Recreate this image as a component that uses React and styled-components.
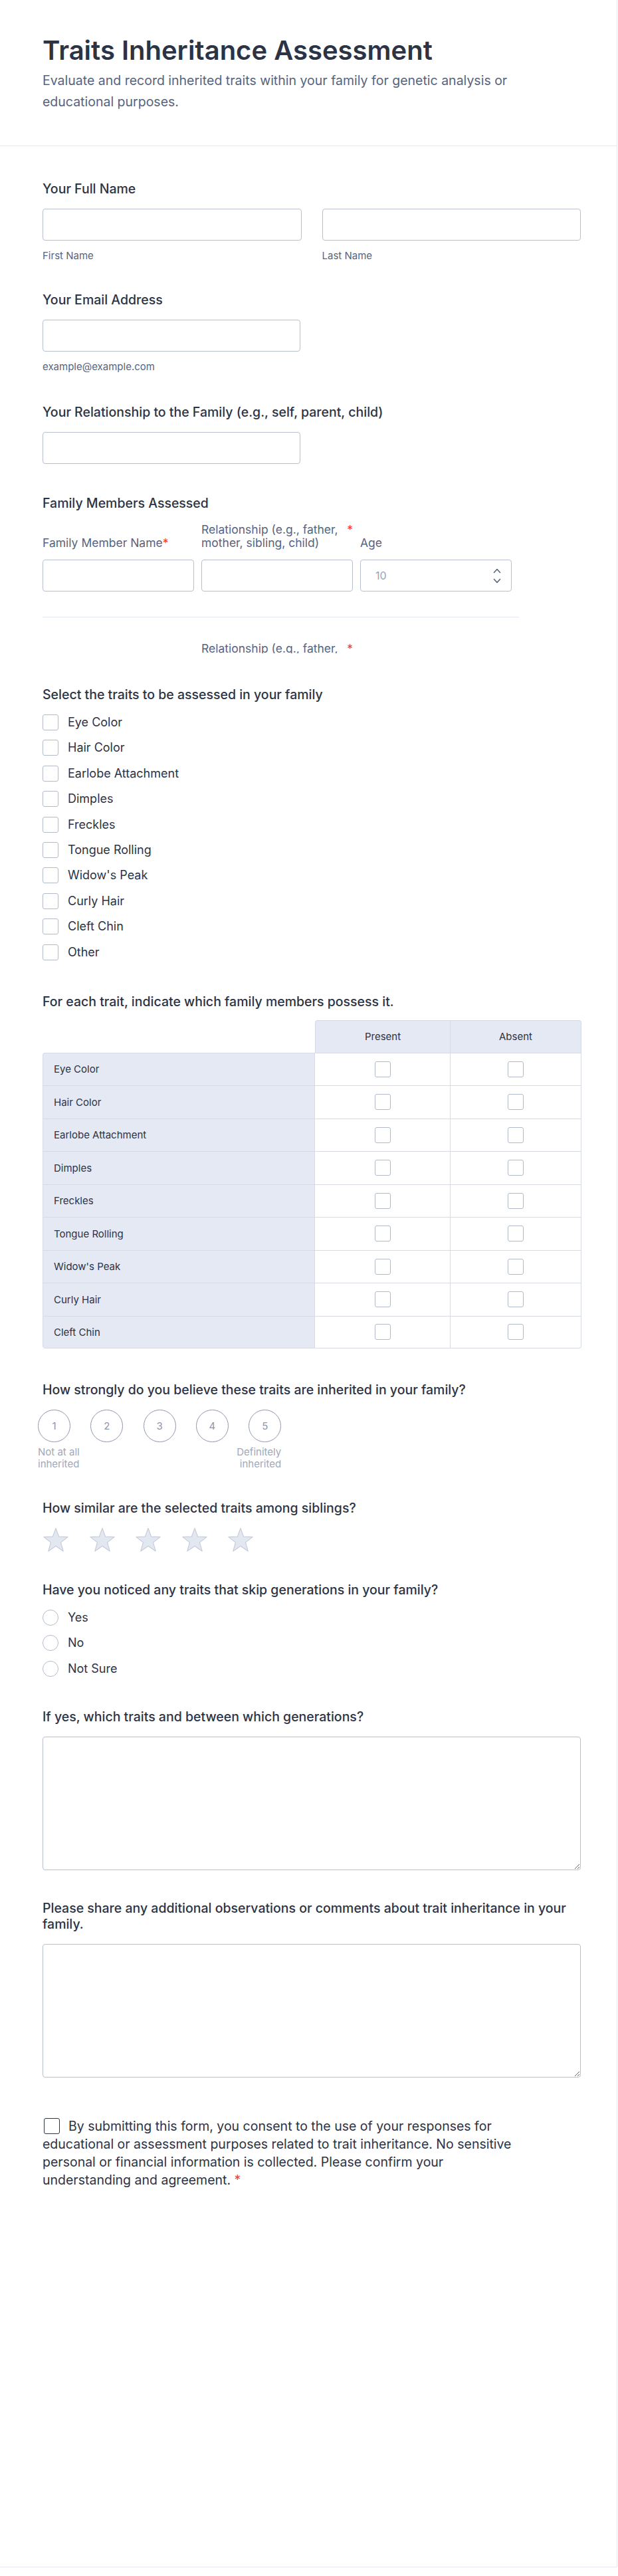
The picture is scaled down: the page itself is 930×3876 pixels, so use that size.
import React from "react";
import styled, { createGlobalStyle } from "styled-components";

const TRAITS = [
  "Eye Color",
  "Hair Color",
  "Earlobe Attachment",
  "Dimples",
  "Freckles",
  "Tongue Rolling",
  "Widow's Peak",
  "Curly Hair",
  "Cleft Chin",
];

const GlobalStyle = createGlobalStyle`
  *, *::before, *::after { box-sizing: border-box; }
  body {
    margin: 0;
    background: #ffffff;
    font-family: Inter, "Noto Sans", "Liberation Sans", sans-serif;
    color: #2c3345;
  }
  input, textarea { font-family: inherit; }
`;

const Card = styled.main`
  width: 929px;
  min-height: 3863px;
  background: #fff;
  border-right: 1px solid #e4e9f2;
  border-bottom: 1px solid #e4e9f2;
`;

const Header = styled.header`
  padding: 52px 64px 50px;
  border-bottom: 1px solid #e1e6ef;
`;

const Title = styled.h1`
  margin: 0 0 5px;
  font-size: 40px;
  line-height: 48px;
  font-weight: 600;
  color: #2c3345;
`;

const Subtitle = styled.p`
  margin: 0;
  max-width: 760px;
  font-size: 19.5px;
  line-height: 32px;
  color: #57647e;
`;

const FormBody = styled.form`
  padding: 52px 54px 80px 64px;
`;

const Question = styled.section`
  margin-top: ${(p) => (p.$mt === undefined ? 45 : p.$mt)}px;
`;

const Label = styled.div`
  margin-bottom: ${(p) => (p.$mb === undefined ? 18 : p.$mb)}px;
  font-size: 19.5px;
  line-height: 24px;
  font-weight: 500;
  color: #2c3345;
`;

const Req = styled.span`
  color: #f23a3c;
`;

const NameGrid = styled.div`
  display: grid;
  grid-template-columns: 1fr 1fr;
  column-gap: 31px;
`;

const Field = styled.div`
  display: flex;
  flex-direction: column;
`;

const TextInput = styled.input`
  width: ${(p) => p.$w || "100%"};
  height: 48px;
  padding: 0 12px;
  border: 1px solid #b8bfcd;
  border-radius: 4px;
  background: #fff;
  font-size: 16px;
  color: #2c3345;
`;

const SubLabel = styled.span`
  margin-top: 13px;
  font-size: 15px;
  line-height: 20px;
  color: #57647e;
`;

const MembersViewport = styled.div`
  width: 717px;
  height: 196px;
  margin-top: 2px;
  overflow: hidden;
`;

const MemberRow = styled.div`
  display: grid;
  grid-template-columns: repeat(3, 228px);
  column-gap: 11px;
  row-gap: 15px;
  align-items: end;
  width: 717px;
  padding-bottom: 38px;
  border-bottom: 1px solid #e3e8f0;

  & + & {
    margin-top: 37px;
  }
`;

const ColLabel = styled.div`
  display: ${(p) => (p.$split ? "flex" : "block")};
  font-size: 17.5px;
  line-height: 20px;
  color: #57647e;
`;

const AgeField = styled.div`
  display: flex;
  align-items: center;
  height: 48px;
  padding: 0 15px 0 22px;
  border: 1px solid #b8bfcd;
  border-radius: 4px;
  background: #fff;

  input {
    flex: 1;
    min-width: 0;
    border: 0;
    outline: 0;
    padding: 0;
    font-size: 16px;
    color: #2c3345;
    background: transparent;
  }
  input::placeholder {
    color: #9aa3b5;
  }
`;

const CheckList = styled.div`
  display: flex;
  flex-direction: column;
  gap: 14.4px;
`;

const OptionItem = styled.label`
  display: flex;
  align-items: center;
  gap: 14px;
  font-size: 18px;
  line-height: 24px;
  color: #2c3345;
`;

const Box = styled.span`
  display: block;
  flex: none;
  width: 24px;
  height: 24px;
  border: 1px solid #b3bbca;
  border-radius: ${(p) => (p.$round ? "50%" : "3px")};
  background: #fff;
  margin: ${(p) => (p.$center ? "0 auto" : "0")};
`;

const Matrix = styled.table`
  width: 811px;
  border-collapse: separate;
  border-spacing: 0;
  table-layout: fixed;
  font-size: 15px;
  color: #2c3345;

  th,
  td {
    padding: 0;
  }
`;

const CornerCell = styled.th`
  width: 410px;
  background: transparent;
`;

const HeadCell = styled.th`
  width: ${(p) => p.$w || "auto"};
  height: 49px;
  background: #e5e9f3;
  border-top: 1px solid #d3d9e5;
  border-right: 1px solid #d3d9e5;
  font-weight: 400;
  text-align: center;

  &:nth-child(2) {
    border-left: 1px solid #d3d9e5;
    border-top-left-radius: 4px;
  }
  &:last-child {
    border-top-right-radius: 4px;
  }
`;

const MatrixRow = styled.tr`
  td {
    height: 49.5px;
    border-top: 1px solid #d6dbe5;
    border-right: 1px solid #d6dbe5;
  }
  &:first-child td:first-child {
    border-top-left-radius: 4px;
  }
  &:last-child td {
    border-bottom: 1px solid #d6dbe5;
  }
  &:last-child td:first-child {
    border-bottom-left-radius: 4px;
  }
  &:last-child td:last-child {
    border-bottom-right-radius: 4px;
  }
`;

const RowHead = styled.td`
  padding-left: 16px !important;
  background: #e5e9f3;
  border-left: 1px solid #d6dbe5;
`;

const MatrixCell = styled.td`
  text-align: center;
  background: #fff;
`;

const ScaleWrap = styled.div`
  display: inline-flex;
  flex-direction: column;
  margin-left: -7px;
`;

const ScaleRow = styled.div`
  display: flex;
  gap: 30.3px;
`;

const ScaleCircle = styled.span`
  display: flex;
  align-items: center;
  justify-content: center;
  width: 49px;
  height: 49px;
  border: 1px solid #8d96aa;
  border-radius: 50%;
  font-size: 15px;
  color: #8d96aa;
`;

const ScaleEnds = styled.div`
  display: flex;
  justify-content: space-between;
  margin-top: 6px;
`;

const ScaleEnd = styled.span`
  font-size: 15px;
  line-height: 18px;
  color: #a0a8b9;
  text-align: ${(p) => p.$align};
`;

const StarRow = styled.div`
  display: flex;
  gap: 29.5px;
`;

const TextArea = styled.textarea`
  display: block;
  width: 100%;
  height: 201px;
  padding: 10px 12px;
  border: 1px solid #b8bfcd;
  border-radius: 4px;
  font-size: 16px;
  color: #2c3345;
  resize: vertical;
`;

const Consent = styled.p`
  margin: 0;
  max-width: 731px;
  font-size: 19.5px;
  line-height: 27px;
  color: #2c3345;
`;

const ConsentBox = styled.span`
  display: inline-block;
  width: 24px;
  height: 24px;
  margin: 0 13px 0 2px;
  vertical-align: -5px;
  border: 1.5px solid #2c3345;
  border-radius: 3px;
`;

const Spinner = () => (
  <svg width="12" height="26" viewBox="0 0 12 26" fill="none">
    <path
      d="M1.5 8.5 L6 3.5 L10.5 8.5"
      stroke="#57647e"
      strokeWidth="1.6"
      strokeLinecap="round"
      strokeLinejoin="round"
    />
    <path
      d="M1.5 18.5 L6 23.5 L10.5 18.5"
      stroke="#57647e"
      strokeWidth="1.6"
      strokeLinecap="round"
      strokeLinejoin="round"
    />
  </svg>
);

const Star = () => (
  <svg width="40" height="40" viewBox="0 0 40 40">
    <polygon
      points="20,1.5 24.6,14.1 38.1,14.6 27.5,22.9 31.2,35.9 20,28.3 8.8,35.9 12.5,22.9 1.9,14.6 15.4,14.1"
      fill="#e3e7f0"
      stroke="#c6ccda"
      strokeWidth="1.2"
      strokeLinejoin="round"
    />
  </svg>
);

const MemberEntry = () => (
  <MemberRow>
    <ColLabel>
      Family Member Name<Req>*</Req>
    </ColLabel>
    <ColLabel $split>
      <span>Relationship (e.g., father, mother, sibling, child)</span>
      <Req>*</Req>
    </ColLabel>
    <ColLabel>Age</ColLabel>
    <TextInput />
    <TextInput />
    <AgeField>
      <input placeholder="10" />
      <Spinner />
    </AgeField>
  </MemberRow>
);

const App = () => (
  <>
    <GlobalStyle />
    <Card>
      <Header>
        <Title>Traits Inheritance Assessment</Title>
        <Subtitle>
          Evaluate and record inherited traits within your family for genetic
          analysis or educational purposes.
        </Subtitle>
      </Header>

      <FormBody>
        <Question $mt={0}>
          <Label>Your Full Name</Label>
          <NameGrid>
            <Field>
              <TextInput />
              <SubLabel>First Name</SubLabel>
            </Field>
            <Field>
              <TextInput />
              <SubLabel>Last Name</SubLabel>
            </Field>
          </NameGrid>
        </Question>

        <Question $mt={44}>
          <Label>Your Email Address</Label>
          <Field>
            <TextInput $w="388px" />
            <SubLabel>example@example.com</SubLabel>
          </Field>
        </Question>

        <Question $mt={46}>
          <Label>Your Relationship to the Family (e.g., self, parent, child)</Label>
          <TextInput $w="388px" />
        </Question>

        <Question $mt={47}>
          <Label>Family Members Assessed</Label>
          <MembersViewport>
            <MemberEntry />
            <MemberEntry />
          </MembersViewport>
        </Question>

        <Question $mt={50}>
          <Label>Select the traits to be assessed in your family</Label>
          <CheckList>
            {[...TRAITS, "Other"].map((t) => (
              <OptionItem key={t}>
                <Box />
                {t}
              </OptionItem>
            ))}
          </CheckList>
        </Question>

        <Question $mt={50}>
          <Label $mb={16}>For each trait, indicate which family members possess it.</Label>
          <Matrix>
            <thead>
              <tr>
                <CornerCell />
                <HeadCell $w="204px">Present</HeadCell>
                <HeadCell>Absent</HeadCell>
              </tr>
            </thead>
            <tbody>
              {TRAITS.map((t) => (
                <MatrixRow key={t}>
                  <RowHead>{t}</RowHead>
                  <MatrixCell>
                    <Box $center />
                  </MatrixCell>
                  <MatrixCell>
                    <Box $center />
                  </MatrixCell>
                </MatrixRow>
              ))}
            </tbody>
          </Matrix>
        </Question>

        <Question $mt={50}>
          <Label>How strongly do you believe these traits are inherited in your family?</Label>
          <ScaleWrap>
            <ScaleRow>
              {[1, 2, 3, 4, 5].map((n) => (
                <ScaleCircle key={n}>{n}</ScaleCircle>
              ))}
            </ScaleRow>
            <ScaleEnds>
              <ScaleEnd $align="left">
                Not at all
                <br />
                inherited
              </ScaleEnd>
              <ScaleEnd $align="right">
                Definitely
                <br />
                inherited
              </ScaleEnd>
            </ScaleEnds>
          </ScaleWrap>
        </Question>

        <Question>
          <Label $mb={17}>How similar are the selected traits among siblings?</Label>
          <StarRow>
            {[1, 2, 3, 4, 5].map((n) => (
              <Star key={n} />
            ))}
          </StarRow>
        </Question>

        <Question $mt={42}>
          <Label>Have you noticed any traits that skip generations in your family?</Label>
          <CheckList>
            {["Yes", "No", "Not Sure"].map((o) => (
              <OptionItem key={o}>
                <Box $round />
                {o}
              </OptionItem>
            ))}
          </CheckList>
        </Question>

        <Question $mt={48}>
          <Label>If yes, which traits and between which generations?</Label>
          <TextArea />
        </Question>

        <Question>
          <Label>
            Please share any additional observations or comments about trait
            inheritance in your family.
          </Label>
          <TextArea />
        </Question>

        <Question $mt={60}>
          <Consent>
            <ConsentBox />
            By submitting this form, you consent to the use of your responses for
            educational or assessment purposes related to trait inheritance. No
            sensitive personal or financial information is collected. Please
            confirm your understanding and agreement. <Req>*</Req>
          </Consent>
        </Question>
      </FormBody>
    </Card>
  </>
);

export default App;
